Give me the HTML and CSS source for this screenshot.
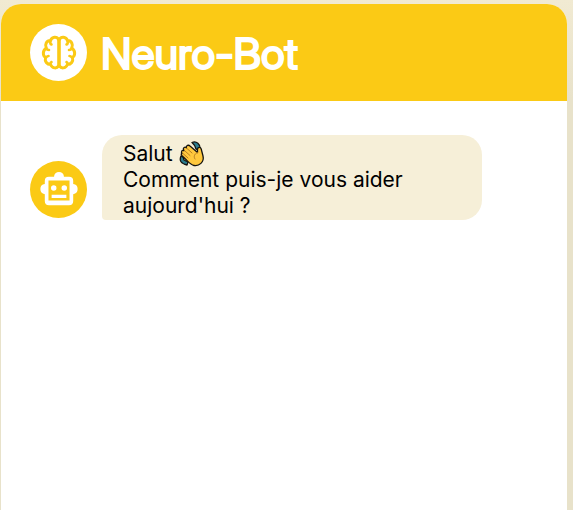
FILE: index.html
```
<!DOCTYPE html>
<html lang="fr">
<head>
<meta charset="utf-8">
<meta name="viewport" content="width=device-width, initial-scale=1">
<title>Neuro-Bot</title>
<link rel="stylesheet" href="styles.css">
</head>
<body>
<main class="chatbot">
  <header class="chat-header">
    <span class="avatar avatar-light">
      <svg class="icon" viewBox="0 0 36 36" aria-hidden="true" fill="none" stroke="currentColor" stroke-width="3" stroke-linecap="round" stroke-linejoin="round">
        <path d="M17.500 4.500C16 1.200 11 1.400 9.500 5.500C5.500 5.500 3.500 9.500 5.300 13C1.500 15.500 1.500 20.500 4.500 22.500C3.500 26.500 6 29.500 9.500 29.500C11.500 34 16 33.500 17.500 31"/>
        <path d="M18.500 4.500C20 1.200 25 1.400 26.500 5.500C30.500 5.500 32.500 9.500 30.700 13C34.500 15.500 34.500 20.500 31.500 22.500C32.500 26.500 30 29.500 26.500 29.500C24.500 34 20 33.500 18.500 31"/>
        <path d="M18 4.500V31" stroke-width="3.600"/>
        <path d="M9.500 6C9 8 9.500 9.200 10.500 9.500M5.300 13.500C6 14.700 7 15 8 15M5 22.500C6 21.500 6.500 21 7.500 21M9.500 29C9.300 28 9.500 27.500 10.500 27M26.500 6C27 8 26.500 9.200 25.500 9.500M30.700 13.500C30 14.700 29 15 28 15M31 22.500C30 21.500 29.500 21 28.500 21M26.500 29C26.700 28 26.500 27.500 25.500 27" stroke-width="2.600"/>
      </svg>
    </span>
    <h1 class="title">Neuro-Bot</h1>
  </header>
  <section class="messages" aria-label="Conversation">
    <article class="message">
      <span class="avatar avatar-brand">
        <svg class="robot" viewBox="0 0 38 36" aria-hidden="true" fill="currentColor">
          <path fill-rule="evenodd" d="M14.300 5.500A4.700 4.700 0 0 1 23.700 5.500H28.500Q32.500 5.500 32.500 9.500V12.300A4.900 4.900 0 0 1 32.500 22V28.500Q32.500 32.500 28.500 32.500H9.500Q5.500 32.500 5.500 28.500V22A4.900 4.900 0 0 1 5.500 12.300V9.500Q5.500 5.500 9.500 5.500ZM9 9V28H29V9Z"/>
          <circle cx="14" cy="16" r="2.600"/>
          <circle cx="24" cy="16" r="2.600"/>
          <path d="M12 22.500H26V25.500H12Z"/>
        </svg>
      </span>
      <p class="bubble">Salut <svg class="wave" viewBox="0 0 26 26" role="img" aria-label="Main qui salue"><g stroke="#15130f" stroke-width="1.300" stroke-linejoin="round"><path fill="#2b7d90" d="M13 1.500C17-.5 22 3 21 9L17 8Q16 4 13 1.500ZM2 15Q-1 22 8 24L9 21L5 19Q5 16 2 15Z"/><path fill="#ffc83d" d="M3 12.500C1.500 10.500 3.500 8.500 5 9.700L4.700 9C3.500 6.800 6 5.300 7.400 6.700C7 4.500 9.500 3.500 11 5L18.500 11.500L18.500 8.500C18.500 6 21.500 5.500 22.200 8L24 15C25.500 21 20 25.500 15 24.500C12 24 9.500 21 7 18.500L3.300 15C1.800 13.500 2 12.500 3 12.500Z"/></g><path fill="none" stroke="#b57d24" stroke-width="1" stroke-linecap="round" d="M4 12.500L9 17M6 10L11 14.500M8 7.500L13 12M18.500 11.500C15 13 14.500 16 16 18"/></svg><br>Comment puis-je vous aider aujourd'hui ?</p>
    </article>
  </section>
</main>
</body>
</html>
```
FILE: styles.css
```
* {
  box-sizing: border-box;
}

body {
  margin: 0;
  padding: 4px 6px 0 1px;
  min-height: 100vh;
  display: flex;
  background: linear-gradient(#f1ead2, #e8e2ca 100px);
  font-family: Inter, "Liberation Sans", sans-serif;
  color: #000;
}

.chatbot {
  flex: 1;
  display: flex;
  flex-direction: column;
  overflow: hidden;
  border-radius: 20px 20px 0 0;
  background: #fff;
}

.chat-header {
  display: flex;
  align-items: center;
  gap: 14px;
  padding: 20px 29px;
  background: #fbca15;
}

.avatar {
  flex: none;
  display: grid;
  place-items: center;
  width: 57px;
  height: 57px;
  border-radius: 50%;
}

.avatar-light {
  background: #fff;
  color: #fbca15;
}

.avatar-brand {
  background: #fbca15;
  color: #fff;
}

.icon {
  width: 36px;
  height: 36px;
}

.robot {
  width: 40px;
  height: 38px;
}

.title {
  margin: 0;
  padding-top: 1px;
  font-family: "Inter Display", Inter, "Liberation Sans", sans-serif;
  font-size: 43px;
  line-height: 56px;
  font-weight: 400;
  -webkit-text-stroke: 2px #fff;
  color: #fff;
}

.messages {
  flex: 1;
  padding: 34px 29px;
}

.message {
  display: flex;
  align-items: flex-end;
  gap: 15px;
}

.message .avatar {
  margin-bottom: 2px;
}

.bubble {
  margin: 0;
  max-width: 380px;
  padding: 6px 21px 1px;
  border-radius: 20px 20px 20px 4px;
  background: #f6efd8;
  font-size: 21px;
  line-height: 26px;
}

.wave {
  width: 26px;
  height: 26px;
  vertical-align: top;
}
```
